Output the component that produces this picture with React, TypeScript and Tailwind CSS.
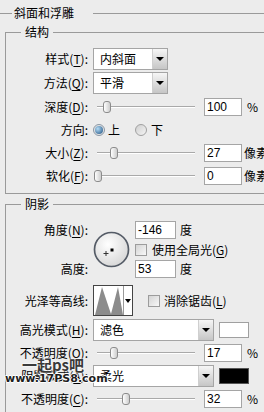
import type { ReactNode } from "react";

function U({ children }: { children: ReactNode }) {
    return <span className="underline underline-offset-[2px]">{children}</span>;
}

function DropBtn() {
    return (
        <div className="w-[15px] h-full border-l border-[#cfcfcf] bg-linear-to-b from-[#f6f6f6] to-[#c6c6c6] flex items-center justify-center">
            <div className="w-0 h-0 border-l-[4px] border-r-[4px] border-t-[4px] border-l-transparent border-r-transparent border-t-black" />
        </div>
    );
}

function Select({ value, w }: { value: string; w: string }) {
    return (
        <div className={`${w} h-[22px] bg-white border border-[#a5a5a5] flex`}>
            <span className="flex-1 pl-[6px] flex items-center">{value}</span>
            <DropBtn />
        </div>
    );
}

function Slider({ pos }: { pos: number }) {
    return (
        <div className="relative w-[106px] h-[14px] flex items-center">
            <div className="mx-[4px] flex-1 h-[2px] border-t border-[#a9a9a9] bg-white" />
            <div
                className="absolute top-[1px] w-[8px] h-[12px] rounded-[3px] border border-[#8c8c8c] bg-linear-to-r from-white to-[#cdcdcd]"
                style={{ left: pos }}
            />
        </div>
    );
}

function Num({ v, w = "w-[38px]" }: { v: string; w?: string }) {
    return (
        <div className={`${w} h-[18px] bg-white border border-[#a5a5a5] pl-[2px] flex items-center font-['Liberation_Sans',sans-serif] text-[12px]`}>
            {v}
        </div>
    );
}

function Check() {
    return <div className="w-[12px] h-[12px] border border-[#9c9c9c] bg-linear-to-br from-[#d4d4d4] to-[#f8f8f8]" />;
}

function Row({ h, label, children }: { h: string; label: ReactNode; children: ReactNode }) {
    return (
        <div className={`flex items-center ${h}`}>
            <div className="w-[82px] text-right whitespace-nowrap">{label}</div>
            <div className="ml-[5px] flex items-center">{children}</div>
        </div>
    );
}

function SliderRow({ h, label, pos, v, unit }: { h: string; label: ReactNode; pos: number; v: string; unit: string }) {
    return (
        <Row h={h} label={label}>
            <Slider pos={pos} />
            <div className="ml-[5px]">
                <Num v={v} />
            </div>
            <span className={unit === "%" ? "ml-[5px]" : "ml-[2px] whitespace-nowrap"}>{unit}</span>
        </Row>
    );
}

function Group({ title, className, children }: { title: string; className: string; children: ReactNode }) {
    return (
        <div className={`ml-[5px] w-[280px] flex flex-col border-l border-b border-[#9a9a9a] ${className}`}>
            <div className="-mt-[7px] h-[14px] flex items-center">
                <div className="w-[15px] border-t border-[#9a9a9a]" />
                <span className="px-[4px]">{title}</span>
                <div className="flex-1 border-t border-[#9a9a9a]" />
            </div>
            {children}
        </div>
    );
}

export default function App() {
    return (
        <div className="relative w-[264px] h-[412px] overflow-hidden bg-[#ececec] text-black text-[12px] leading-[14px] font-['Noto_Sans_CJK_SC',sans-serif]">
            {/* title */}
            <div className="mt-[6px] h-[14px] flex items-center">
                <div className="w-[12px] border-t border-[#9a9a9a]" />
                <span className="pl-[2px] pr-[19px]">斜面和浮雕</span>
                <div className="flex-1 border-t border-[#9a9a9a]" />
            </div>

            <Group title="结构" className="mt-[12px] pb-[6px]">
                <div className="mt-[8px]" />
                <Row h="h-[24px]" label={<>样式(<U>T</U>):</>}>
                    <Select w="w-[75px]" value="内斜面" />
                </Row>
                <Row h="h-[24px]" label={<>方法(<U>Q</U>):</>}>
                    <Select w="w-[75px]" value="平滑" />
                </Row>
                <SliderRow h="h-[24px]" label={<>深度(<U>D</U>):</>} pos={10} v="100" unit="%" />
                <Row h="h-[22px]" label="方向:">
                    <div className="w-[12px] h-[12px] rounded-full border border-[#8a97a5] bg-[#e4e4e4] flex items-center justify-center">
                        <div className="w-[8px] h-[8px] rounded-full bg-[radial-gradient(circle_at_35%_35%,#b4dcf6,#1d4f7f)]" />
                    </div>
                    <span className="ml-[3px]">上</span>
                    <div className="ml-[15px] w-[12px] h-[12px] rounded-full border border-[#a0a0a0] bg-linear-to-br from-[#d0d0d0] to-[#f4f4f4]" />
                    <span className="ml-[4px]">下</span>
                </Row>
                <SliderRow h="h-[23px]" label={<>大小(<U>Z</U>):</>} pos={17} v="27" unit="像素" />
                <SliderRow h="h-[23px]" label={<>软化(<U>F</U>):</>} pos={1} v="0" unit="像素" />
            </Group>

            <Group title="阴影" className="mt-[10px] pb-[10px]">
                {/* angle / altitude */}
                <div className="mt-[10px] h-[57px] flex">
                    <div className="w-[82px] flex flex-col justify-between text-right">
                        <div className="h-[18px] flex items-center justify-end">
                            角度(<U>N</U>):
                        </div>
                        <div className="h-[18px] flex items-center justify-end">高度:</div>
                    </div>
                    <div className="ml-[5px] self-center">
                        <svg width="37" height="37" viewBox="0 0 37 37">
                            <defs>
                                <radialGradient id="dial" cx="40%" cy="35%" r="70%">
                                    <stop offset="0" stopColor="#ffffff" />
                                    <stop offset="1" stopColor="#d6d6d6" />
                                </radialGradient>
                            </defs>
                            <circle cx="18.5" cy="18.5" r="17" fill="url(#dial)" stroke="#545b66" strokeWidth="1.7" />
                            <path d="M10.5 22.5h5M13 20v5" stroke="#333" strokeWidth="1" />
                            <rect x="17.5" y="17.5" width="3" height="3" fill="#000" />
                        </svg>
                    </div>
                    <div className="ml-[5px] flex flex-col">
                        <div className="h-[18px] flex items-center">
                            <Num v="-146" w="w-[41px]" />
                            <span className="ml-[4px]">度</span>
                        </div>
                        <div className="mt-[5px] h-[12px] flex items-center">
                            <Check />
                            <span className="ml-[5px] whitespace-nowrap">
                                使用全局光(<U>G</U>)
                            </span>
                        </div>
                        <div className="mt-[4px] h-[18px] flex items-center">
                            <Num v="53" w="w-[41px]" />
                            <span className="ml-[4px]">度</span>
                        </div>
                    </div>
                </div>

                {/* gloss contour */}
                <div className="mt-[7px] h-[31px] flex items-center">
                    <div className="w-[82px] text-right">光泽等高线:</div>
                    <div className="ml-[5px] w-[40px] h-[31px] bg-white border border-[#444] flex">
                        <svg width="29" height="29" viewBox="0 0 29 29">
                            <polygon points="1,29 8,1 17,28 24,1 29,29" fill="#8c8c8c" />
                        </svg>
                        <div className="flex-1 border-l border-[#9a9a9a] flex items-center justify-center">
                            <div className="w-0 h-0 border-l-[3px] border-r-[3px] border-t-[4px] border-l-transparent border-r-transparent border-t-black" />
                        </div>
                    </div>
                    <div className="ml-[15px]">
                        <Check />
                    </div>
                    <span className="ml-[4px] whitespace-nowrap">
                        消除锯齿(<U>L</U>)
                    </span>
                </div>

                <div className="mt-[2px]" />
                <Row h="h-[24px]" label={<>高光模式(<U>H</U>):</>}>
                    <Select w="w-[121px]" value="滤色" />
                    <div className="ml-[5px] w-[30px] h-[16px] bg-white border border-[#a0a0a0]" />
                </Row>
                <SliderRow h="h-[22px]" label={<>不透明度(<U>O</U>):</>} pos={17} v="17" unit="%" />
                <Row h="h-[24px]" label={<>阴影模式(<U>A</U>):</>}>
                    <Select w="w-[121px]" value="柔光" />
                    <div className="ml-[5px] w-[30px] h-[16px] bg-black border border-[#555]" />
                </Row>
                <SliderRow h="h-[22px]" label={<>不透明度(<U>C</U>):</>} pos={29} v="32" unit="%" />
            </Group>

            {/* watermark */}
            <div className="absolute left-[22px] top-[357px] text-[15px] leading-[16px] font-bold text-[#3a3a3a] [text-shadow:0_0_2px_#fff,0_0_2px_#fff]">
                一起ps吧
            </div>
            <div className="absolute left-[5px] top-[372px] font-['DejaVu_Sans',sans-serif] font-bold text-[11px] leading-[13px] text-[#1e1e1e] [text-shadow:1px_0_#fff,-1px_0_#fff,0_1px_#fff,0_-1px_#fff]">
                www.17PS8.com
            </div>
        </div>
    );
}
